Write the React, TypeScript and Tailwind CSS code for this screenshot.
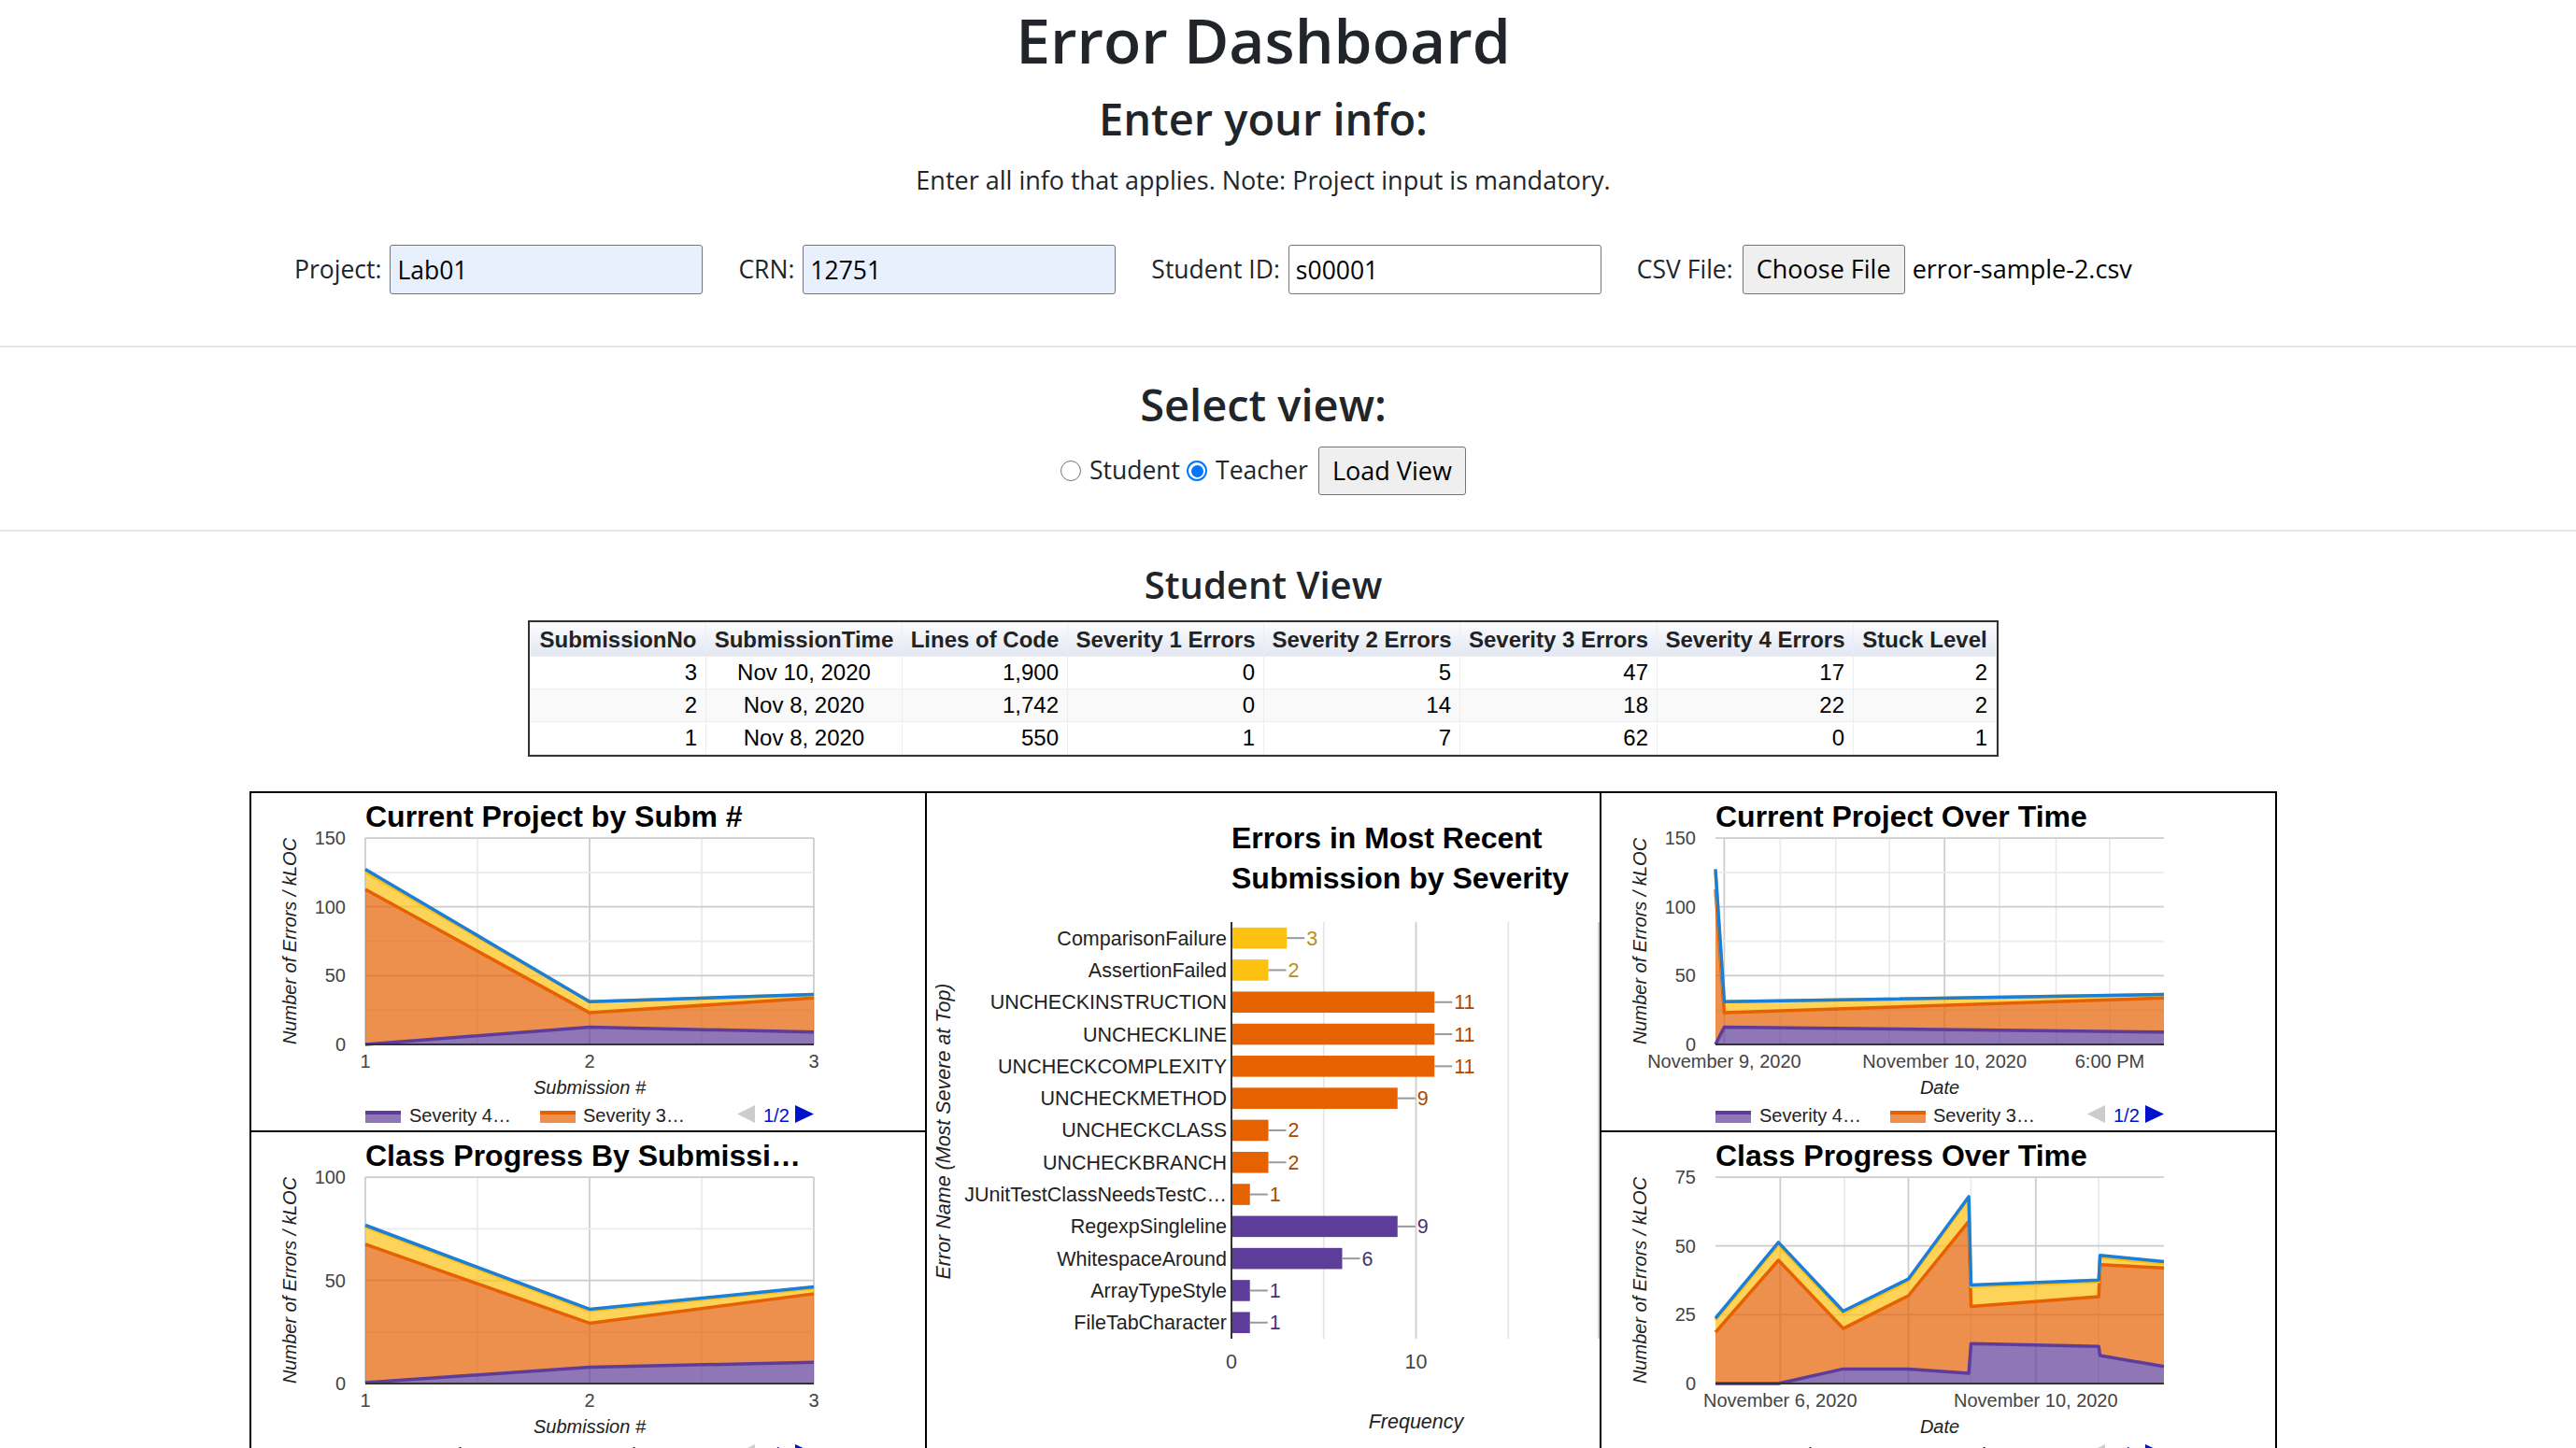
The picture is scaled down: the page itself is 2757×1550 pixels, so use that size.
import React from 'react'

const SEV4 = '#5e3c99'
const SEV3 = '#e66101'
const SEV2 = '#fcc013'
const SEV1 = '#1c7ed6'
const COLORS = [SEV4, SEV3, SEV2, SEV1]

// plot box inside each chart cell
const PL = 122
const PW = 480
const PT = 48
const PH = 221

type Step = { v: number; major: boolean; label?: string }
type VLine = { x: number; major: boolean }
type AreaSpec = {
  title: string
  yMax: number
  ySteps: Step[]
  xs: number[]
  stacks: number[][]
  vGrid: VLine[]
  xLabels: { x: number; text: string }[]
  xTitle: string
}

const steps150: Step[] = [0, 25, 50, 75, 100, 125, 150].map((v) => ({
  v,
  major: v % 50 === 0,
  label: v % 50 === 0 ? String(v) : undefined,
}))

const byNum: VLine[] = [
  { x: 0, major: true },
  { x: 120, major: false },
  { x: 240, major: true },
  { x: 360, major: false },
  { x: 480, major: true },
]

const charts: Record<string, AreaSpec> = {
  projectBySubm: {
    title: 'Current Project by Subm #',
    yMax: 150,
    ySteps: steps150,
    xs: [0, 240, 480],
    stacks: [
      [0, 12.6, 8.95],
      [112.7, 23, 33.7],
      [125.4, 31, 36.3],
      [127.3, 31, 36.3],
    ],
    vGrid: byNum,
    xLabels: [
      { x: 0, text: '1' },
      { x: 240, text: '2' },
      { x: 480, text: '3' },
    ],
    xTitle: 'Submission #',
  },
  classBySubm: {
    title: 'Class Progress By Submissi…',
    yMax: 100,
    ySteps: [0, 25, 50, 75, 100].map((v) => ({
      v,
      major: v % 50 === 0,
      label: v % 50 === 0 ? String(v) : undefined,
    })),
    xs: [0, 240, 480],
    stacks: [
      [0.5, 7.9, 10.3],
      [67.5, 29.2, 43.5],
      [76, 35.3, 46.2],
      [76.7, 36, 46.8],
    ],
    vGrid: byNum,
    xLabels: [
      { x: 0, text: '1' },
      { x: 240, text: '2' },
      { x: 480, text: '3' },
    ],
    xTitle: 'Submission #',
  },
  projectOverTime: {
    title: 'Current Project Over Time',
    yMax: 150,
    ySteps: steps150,
    xs: [0, 9.4, 480],
    stacks: [
      [0, 12.6, 8.95],
      [112.7, 23, 33.7],
      [125.4, 31, 36.3],
      [127.3, 31, 36.3],
    ],
    vGrid: [
      { x: 9.4, major: true },
      { x: 69.3, major: false },
      { x: 128.7, major: false },
      { x: 186.2, major: false },
      { x: 245.2, major: true },
      { x: 304.1, major: false },
      { x: 364.5, major: false },
      { x: 422, major: false },
    ],
    xLabels: [
      { x: 9.4, text: 'November 9, 2020' },
      { x: 245.2, text: 'November 10, 2020' },
      { x: 422, text: '6:00 PM' },
    ],
    xTitle: 'Date',
  },
  classOverTime: {
    title: 'Class Progress Over Time',
    yMax: 75,
    ySteps: [0, 25, 50, 75].map((v) => ({ v, major: true, label: String(v) })),
    xs: [0, 67.4, 136.7, 206.5, 271.1, 273.5, 410.2, 411.6, 480],
    stacks: [
      [0, 0, 5.3, 5.3, 3.7, 14.5, 13.5, 10.2, 6.2],
      [18.6, 44.8, 20, 31.9, 58.9, 28, 31.6, 43.2, 42],
      [23, 50.5, 25.6, 37.3, 67.2, 35.2, 37, 45.9, 43.6],
      [23.7, 51.3, 26.3, 38, 67.9, 35.8, 37.6, 46.6, 44.3],
    ],
    vGrid: [
      { x: 69.3, major: true },
      { x: 138.2, major: false },
      { x: 206.5, major: true },
      { x: 273.5, major: false },
      { x: 342.8, major: true },
      { x: 410.2, major: false },
    ],
    xLabels: [
      { x: 69.3, text: 'November 6, 2020' },
      { x: 342.8, text: 'November 10, 2020' },
    ],
    xTitle: 'Date',
  },
}

function AreaChart({ spec }: { spec: AreaSpec }) {
  const py = (v: number) => PT + PH - (v / spec.yMax) * PH
  const px = (x: number) => PL + x
  const zero = spec.xs.map(() => 0)
  const pts = (vals: number[]) => spec.xs.map((x, i) => `${px(x)},${py(vals[i])}`)

  return (
    <svg width="720" height="361" className="block font-['Liberation_Sans',Arial,sans-serif]">
      <text x={PL} y={36} fontSize="32" fontWeight="bold" fill="#000">
        {spec.title}
      </text>

      {/* grid */}
      {spec.vGrid.map((g) => (
        <line
          key={'v' + g.x}
          x1={px(g.x)}
          x2={px(g.x)}
          y1={PT}
          y2={PT + PH}
          stroke={g.major ? '#cccccc' : '#ebebeb'}
          strokeWidth="1.75"
        />
      ))}
      {spec.ySteps.map((s) => (
        <line
          key={'h' + s.v}
          x1={PL}
          x2={PL + PW}
          y1={py(s.v)}
          y2={py(s.v)}
          stroke={s.major ? '#cccccc' : '#ebebeb'}
          strokeWidth="1.75"
        />
      ))}

      {/* stacked areas */}
      {spec.stacks.map((upper, k) => {
        const lower = k ? spec.stacks[k - 1] : zero
        const poly = [...pts(upper), ...pts(lower).reverse()].join(' ')
        return <polygon key={'a' + k} points={poly} fill={COLORS[k]} fillOpacity="0.7" />
      })}
      {spec.stacks.map((upper, k) => (
        <polyline
          key={'l' + k}
          points={pts(upper).join(' ')}
          fill="none"
          stroke={COLORS[k]}
          strokeWidth="3.5"
          strokeLinejoin="round"
        />
      ))}
      <line x1={PL} x2={PL + PW} y1={py(0)} y2={py(0)} stroke="#333" strokeWidth="2" />

      {/* axis labels */}
      {spec.ySteps
        .filter((s) => s.label)
        .map((s) => (
          <text key={'yl' + s.v} x={PL - 21} y={py(s.v) + 7} fontSize="20" fill="#444" textAnchor="end">
            {s.label}
          </text>
        ))}
      {spec.xLabels.map((l) => (
        <text key={'xl' + l.text} x={px(l.x)} y={PT + PH + 25} fontSize="20" fill="#444" textAnchor="middle">
          {l.text}
        </text>
      ))}
      <text x={PL + PW / 2} y={PT + PH + 53} fontSize="20" fontStyle="italic" fill="#222" textAnchor="middle">
        {spec.xTitle}
      </text>
      <text
        x={41}
        y={PT + PH / 2 + 7}
        fontSize="20"
        fontStyle="italic"
        fill="#222"
        textAnchor="middle"
        transform={`rotate(-90 41 ${PT + PH / 2})`}
      >
        Number of Errors / kLOC
      </text>

      {/* legend */}
      <rect x={PL} y={340} width="38" height="13" fill={SEV4} fillOpacity="0.7" />
      <rect x={PL} y={340} width="38" height="4" fill={SEV4} />
      <text x={PL + 47} y={352} fontSize="20" fill="#222">
        Severity 4…
      </text>
      <rect x={PL + 187} y={340} width="38" height="13" fill={SEV3} fillOpacity="0.7" />
      <rect x={PL + 187} y={340} width="38" height="4" fill={SEV3} />
      <text x={PL + 233} y={352} fontSize="20" fill="#222">
        Severity 3…
      </text>
      <polygon points={`${PL + 417},334 ${PL + 398},343.5 ${PL + 417},353`} fill="#cccccc" />
      <text x={PL + 426} y={352} fontSize="20" fill="#0011cc">
        1/2
      </text>
      <polygon points={`${PL + 460},334 ${PL + 480},343.5 ${PL + 460},353`} fill="#0011cc" />
    </svg>
  )
}

const BAR_COLORS: Record<number, { bar: string; label: string }> = {
  2: { bar: '#fdc112', label: '#b8901a' },
  3: { bar: '#e66100', label: '#ad4800' },
  4: { bar: '#5e3c99', label: '#47307a' },
}

const BARS: [string, number, number][] = [
  ['ComparisonFailure', 3, 2],
  ['AssertionFailed', 2, 2],
  ['UNCHECKINSTRUCTION', 11, 3],
  ['UNCHECKLINE', 11, 3],
  ['UNCHECKCOMPLEXITY', 11, 3],
  ['UNCHECKMETHOD', 9, 3],
  ['UNCHECKCLASS', 2, 3],
  ['UNCHECKBRANCH', 2, 3],
  ['JUnitTestClassNeedsTestC…', 1, 3],
  ['RegexpSingleline', 9, 4],
  ['WhitespaceAround', 6, 4],
  ['ArrayTypeStyle', 1, 4],
  ['FileTabCharacter', 1, 4],
]

function BarChart() {
  const AX = 326
  const U = 19.75
  const TOP = 138
  const ROW = 34.3
  return (
    <svg width="720" height="724" className="block font-['Liberation_Sans',Arial,sans-serif]">
      <text x={AX} y={59} fontSize="32" fontWeight="bold" fill="#000">
        Errors in Most Recent
      </text>
      <text x={AX} y={102} fontSize="32" fontWeight="bold" fill="#000">
        Submission by Severity
      </text>

      {[5, 10, 15].map((v) => (
        <line
          key={v}
          x1={AX + v * U}
          x2={AX + v * U}
          y1={TOP}
          y2={TOP + ROW * 13}
          stroke={v === 10 ? '#cccccc' : '#e6e6e6'}
          strokeWidth="1.75"
        />
      ))}
      <line x1={719} x2={719} y1={TOP} y2={TOP + ROW * 13} stroke="#cccccc" strokeWidth="1.75" />

      {BARS.map(([name, v, sev], i) => {
        const cy = TOP + ROW * i + ROW / 2
        const end = AX + v * U
        const c = BAR_COLORS[sev]
        return (
          <g key={name}>
            <text x={AX - 5} y={cy + 7.5} fontSize="21.5" fill="#222" textAnchor="end">
              {name}
            </text>
            <rect x={AX} y={cy - 11.3} width={v * U} height="22.6" fill={c.bar} />
            <line x1={end} x2={end + 19} y1={cy} y2={cy} stroke="#999" strokeWidth="2" />
            <text x={end + 21} y={cy + 7.5} fontSize="21.5" fill={c.label}>
              {v}
            </text>
          </g>
        )
      })}

      <line x1={AX} x2={AX} y1={TOP} y2={TOP + ROW * 13} stroke="#333" strokeWidth="2" />
      <text x={AX} y={616} fontSize="21.5" fill="#444" textAnchor="middle">
        0
      </text>
      <text x={AX + 10 * U} y={616} fontSize="21.5" fill="#444" textAnchor="middle">
        10
      </text>
      <text x={AX + 10 * U} y={680} fontSize="21.5" fontStyle="italic" fill="#222" textAnchor="middle">
        Frequency
      </text>
      <text
        x={17}
        y={370}
        fontSize="21.5"
        fontStyle="italic"
        fill="#222"
        textAnchor="middle"
        transform="rotate(-90 17 362)"
      >
        Error Name (Most Severe at Top)
      </text>
    </svg>
  )
}

const COLS = [
  { h: 'SubmissionNo', w: 'w-[188px]', align: 'text-right' },
  { h: 'SubmissionTime', w: 'w-[210px]', align: 'text-center' },
  { h: 'Lines of Code', w: 'w-[177px]', align: 'text-right' },
  { h: 'Severity 1 Errors', w: 'w-[210px]', align: 'text-right' },
  { h: 'Severity 2 Errors', w: 'w-[210px]', align: 'text-right' },
  { h: 'Severity 3 Errors', w: 'w-[211px]', align: 'text-right' },
  { h: 'Severity 4 Errors', w: 'w-[210px]', align: 'text-right' },
  { h: 'Stuck Level', w: 'w-[153px]', align: 'text-right' },
]

const ROWS = [
  ['3', 'Nov 10, 2020', '1,900', '0', '5', '47', '17', '2'],
  ['2', 'Nov 8, 2020', '1,742', '0', '14', '18', '22', '2'],
  ['1', 'Nov 8, 2020', '550', '1', '7', '62', '0', '1'],
]

function Field({ label, value, filled }: { label: string; value: string; filled?: boolean }) {
  return (
    <div className="flex items-center">
      <span>{label}</span>
      <input
        readOnly
        value={value}
        className={`ml-[9px] h-[53px] w-[335px] rounded-[3px] border border-[#767676] px-[7px] text-[26.5px] text-black outline-none ${
          filled ? 'bg-[#e8f0fe]' : 'bg-white'
        }`}
      />
    </div>
  )
}

export default function App() {
  return (
    <div className="min-h-screen bg-white font-['Open_Sans',sans-serif] text-[#212529]">
      {/* Header */}
      <div className="w-[2704px] text-center">
        <h1 className="mt-px h-[82px] text-[66px] leading-[82px] font-semibold">Error Dashboard</h1>
        <h3 className="mt-[15px] h-[59px] text-[47px] leading-[59px] font-semibold">Enter your info:</h3>
        <p className="mt-[15px] h-[42px] text-[27px] leading-[42px]">
          Enter all info that applies. Note: Project input is mandatory.
        </p>
      </div>

      {/* Inputs */}
      <div className="mt-[48px] flex h-[53px] items-center gap-[38px] pl-[315px] text-[26.5px]">
        <Field label="Project:" value="Lab01" filled />
        <Field label="CRN:" value="12751" filled />
        <Field label="Student ID:" value="s00001" />
        <div className="flex items-center">
          <span>CSV File:</span>
          <button className="ml-[10px] h-[53px] w-[174px] rounded-[3px] border border-[#767676] bg-[#efefef] text-[27px] text-black">
            Choose File
          </button>
          <span className="ml-[8px] text-[27px] text-black">error-sample-2.csv</span>
        </div>
      </div>

      <hr className="mt-[55px] border-t-2 border-[#e6e6e6]" />

      {/* View select */}
      <div className="w-[2704px] text-center">
        <h3 className="mt-[32px] h-[59px] text-[47px] leading-[59px] font-semibold">Select view:</h3>
        <div className="mt-[15px] flex h-[52px] items-center justify-center text-[26.5px]">
          <span className="h-[22px] w-[22px] rounded-full border border-[#767676] bg-white" />
          <span className="ml-[9px]">Student</span>
          <span className="ml-[7px] flex h-[22px] w-[22px] items-center justify-center rounded-full border-2 border-[#0075ff] bg-white">
            <span className="h-[13px] w-[13px] rounded-full bg-[#0075ff]" />
          </span>
          <span className="ml-[9px]">Teacher</span>
          <button className="ml-[11px] h-[52px] w-[158px] rounded-[3px] border border-[#767676] bg-[#efefef] text-[27px] text-black">
            Load View
          </button>
        </div>
      </div>

      <hr className="mt-[37px] border-t-2 border-[#e6e6e6]" />

      {/* Student table */}
      <div className="w-[2704px]">
        <h4 className="mt-[32px] h-[50px] text-center text-[40px] leading-[50px] font-semibold">Student View</h4>
        <div className="mt-[13px] flex justify-center">
          <div className="border-2 border-[#333]">
            <table className="border-collapse font-['Liberation_Sans',Arial,sans-serif] text-[24px] leading-[26px] text-black">
              <thead>
                <tr className="h-[36px] bg-linear-to-b from-[#fbfcfe] to-[#e1e6f2]">
                  {COLS.map((c) => (
                    <th
                      key={c.h}
                      className={`${c.w} border border-[#eeeeee] px-[7px] text-center font-bold whitespace-nowrap text-[#222]`}
                    >
                      {c.h}
                    </th>
                  ))}
                </tr>
              </thead>
              <tbody>
                {ROWS.map((r, i) => (
                  <tr key={i} className={`h-[35px] ${i === 1 ? 'bg-[#f9f9f9]' : 'bg-white'}`}>
                    {r.map((cell, j) => (
                      <td key={j} className={`border border-[#eeeeee] px-[9px] whitespace-nowrap ${COLS[j].align}`}>
                        {cell}
                      </td>
                    ))}
                  </tr>
                ))}
              </tbody>
            </table>
          </div>
        </div>
      </div>

      {/* Charts */}
      <div className="mt-[37px] flex w-[2704px] justify-center">
        <div className="grid w-[2170px] grid-cols-[723px_722px_723px] border-t-2 border-l-2 border-black">
          <div className="h-[363px] border-r-2 border-b-2 border-black">
            <AreaChart spec={charts.projectBySubm} />
          </div>
          <div className="row-span-2 border-r-2 border-b-2 border-black">
            <BarChart />
          </div>
          <div className="h-[363px] border-r-2 border-b-2 border-black">
            <AreaChart spec={charts.projectOverTime} />
          </div>
          <div className="h-[363px] border-r-2 border-b-2 border-black">
            <AreaChart spec={charts.classBySubm} />
          </div>
          <div className="h-[363px] border-r-2 border-b-2 border-black">
            <AreaChart spec={charts.classOverTime} />
          </div>
        </div>
      </div>
    </div>
  )
}
